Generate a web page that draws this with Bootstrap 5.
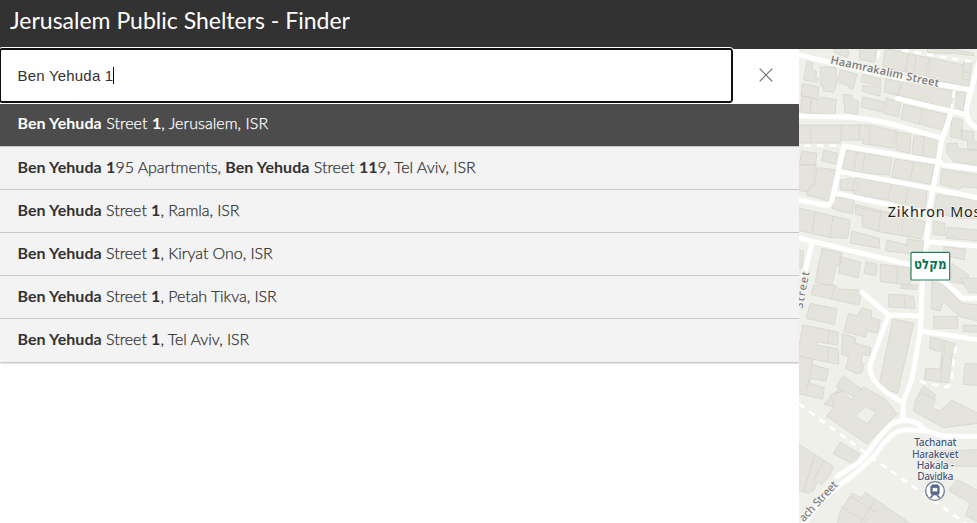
<!DOCTYPE html>
<html lang="en">
<head>
<meta charset="utf-8">
<meta name="viewport" content="width=device-width, initial-scale=1">
<title>Jerusalem Public Shelters - Finder</title>
<link href="https://cdn.jsdelivr.net/npm/bootstrap@5.3.0/dist/css/bootstrap.min.css" rel="stylesheet">
<style>
body{font-family:Lato,"Open Sans",sans-serif;color:#323232;height:100vh;overflow:hidden}
.app-header{height:49px;background:#323232;padding:0 10px 10px}
.app-header h1{font-size:23px;line-height:28px;font-weight:400}
.finder{width:799px}
.search-row{height:55px}
.search-field{width:734px;height:55px;margin-top:-1px;margin-left:-1px;border:2px solid #101010;outline:1px solid #fff;border-radius:3px;padding:0 0 1px 16.5px;font:15px "Liberation Sans",sans-serif;letter-spacing:.2px;position:relative;z-index:1}
.caret{width:1px;height:17px;background:#000}
.clear-btn{width:66px;height:52px}
.suggestions{--bs-list-group-border-radius:0;box-shadow:0 1px 2px rgba(0,0,0,.3)}
.suggestions .list-group-item{height:43.1px;padding:0 17.5px 3px;background:#f3f3f3;color:#323232;border:0;border-bottom:1px solid #c8c8c8;font-size:16px;font-weight:300;letter-spacing:-.05px;white-space:pre;-webkit-text-stroke:.25px currentColor}
.suggestions .list-group-item.active{background:#4c4c4c;color:#fff;margin:0;height:43px;padding-bottom:4px;letter-spacing:.05px}
.suggestions b{font-weight:700;letter-spacing:.07px;-webkit-text-stroke:0}
.map-pane{width:178px;background:#eff0ea}
.bld{fill:#e4e4dc;stroke:#d6d6cd;stroke-width:2.5}
.road{fill:none;stroke:#fff;stroke-width:15;stroke-linejoin:round;stroke-linecap:round}
.dash{fill:none;stroke:#fff;stroke-width:8;stroke-dasharray:20 18}
.halo{paint-order:stroke;stroke:#f4f4ef;stroke-width:6;stroke-linejoin:round;font-family:"Noto Sans",sans-serif}
</style>
<script src="https://cdn.jsdelivr.net/npm/bootstrap@5.3.0/dist/js/bootstrap.bundle.min.js"></script>
</head>
<body class="d-flex flex-column bg-white">
<header class="app-header d-flex align-items-center text-white"><h1 class="m-0">Jerusalem Public Shelters - Finder</h1></header>
<main class="d-flex flex-grow-1">
<section class="finder flex-shrink-0">
  <div class="search-row d-flex">
    <div class="search-field d-flex align-items-center bg-white flex-shrink-0" role="textbox" aria-label="Search">Ben Yehuda 1<span class="caret"></span></div>
    <button class="clear-btn btn border-0 p-0 d-flex align-items-center justify-content-center" aria-label="Clear"><svg width="14" height="14" viewBox="0 0 14 14" fill="none" stroke="#6e6e6e" stroke-width="1.2"><path d="M.7.7l12.6 12.6M13.3.7.7 13.3"/></svg></button>
  </div>
  <div class="suggestions list-group list-group-flush">
    <a class="list-group-item active d-flex align-items-center"><span><b>Ben Yehuda</b> Street <b>1</b>, Jerusalem, ISR</span></a>
    <a class="list-group-item d-flex align-items-center"><span><b>Ben Yehuda</b> <b>1</b>95 Apartments, <b>Ben Yehuda</b> Street <b>11</b>9, Tel Aviv, ISR</span></a>
    <a class="list-group-item d-flex align-items-center"><span><b>Ben Yehuda</b> Street <b>1</b>, Ramla, ISR</span></a>
    <a class="list-group-item d-flex align-items-center"><span><b>Ben Yehuda</b> Street <b>1</b>, Kiryat Ono, ISR</span></a>
    <a class="list-group-item d-flex align-items-center"><span><b>Ben Yehuda</b> Street <b>1</b>, Petah Tikva, ISR</span></a>
    <a class="list-group-item d-flex align-items-center"><span><b>Ben Yehuda</b> Street <b>1</b>, Tel Aviv, ISR</span></a>
  </div>
</section>
<aside class="map-pane flex-shrink-0">
<svg class="d-block" width="178" height="474" viewBox="6 12 534 1422">
  <!-- Buildings, north to south -->
  <g class="bld">
    <path d="M30 48 47 54 46 72 59 79 56 98 64 101 60 112 20 105ZM70 66H117V122L114 136 108 142 79 138V124L70 121ZM130 75 180 87 168 134 156 130 154 123 120 111ZM110 0H145L155 24 150 38 112 22ZM190 0H240L233 52 187 44ZM265 10 345 28 396 38 388 92 322 80 258 64ZM335 25 325 78M358 30 350 86M400 38 500 60 498 80 520 84 515 125 430 108 392 96ZM500 48 525 54 517 105 498 102ZM390 10H455L530 25V32L470 25H420L392 22Z"/>
    <path d="M198 88 252 102 250 124 192 110ZM196 120 252 128 248 154 196 138ZM266 100 312 112 302 152 262 140ZM320 106 470 138 460 192 350 162 300 150ZM478 140H505L500 198 476 190ZM16 116 66 126 62 160 12 152ZM16 152 44 158 38 205 8 200ZM44 158 65 165 70 156 118 164 114 208 38 205ZM138 148 165 150 166 164 184 168 182 208 144 202ZM198 156 262 170 258 202 192 186ZM268 160 312 172 304 216 262 206ZM320 178 448 208 440 256 400 246 312 222ZM376 192 366 236"/>
    <path d="M0 240H220L298 258 290 310 198 296 196 285H132L130 294H0ZM42 240V294M133 240V285M187 240V285M217 240V298M300 260 342 268 338 325 296 315ZM350 272 430 278 420 340 345 328ZM382 274 376 333M465 218 497 225 492 282 460 276ZM495 255 530 260V290H550V316L512 312V285H494ZM450 295H482V310L550 318V362L470 350 450 325ZM14 318 60 325 55 360 8 358ZM80 316 122 325 116 358 74 348ZM150 316 285 338 277 390 210 385 135 372ZM180 320 170 375M204 324 196 382M294 342 412 360 400 418 284 396ZM350 352 340 406"/>
  </g>
  <g class="bld" transform="translate(0 360)">
    <path d="M0 0H58L48 60 30 80 0 76ZM60 8 116 14 104 110 28 90 40 60 52 62ZM175 38 390 75 385 140 270 105 180 90 165 80ZM282 60 272 102M335 66 324 116M130 45 165 40 185 60 175 78 130 75ZM435 12 550 30V70L500 65 485 72 430 58ZM420 88 550 108V160H480L412 140ZM108 95 172 102 166 145 130 140 105 130ZM0 128 158 165V180L152 220 100 218 0 195ZM56 142 44 206M108 154 98 218M175 118 385 170 372 222 245 200 195 185 196 152 175 148ZM178 126 250 142M252 140 244 198M322 156 312 208"/>
    <path d="M165 198 248 220 246 250 160 234ZM270 225 330 240V222L380 228 375 270 265 258ZM410 168 444 175V212L408 208ZM452 186 550 196V228L448 220ZM440 245 505 252 502 285 460 275 440 280ZM75 250 136 264 128 300 118 302 104 362 54 352ZM130 275 190 292 184 338 125 325ZM207 290 240 298 236 332 202 325ZM250 298 340 308V360L250 350ZM300 304V354M0 255 20 258 14 310 0 310ZM465 295 515 330V360L460 350Z"/>
  </g>
  <g class="bld" transform="translate(0 720)">
    <path d="M50 0H115L125 12 185 15 192 28 186 60 100 42 42 28ZM115 0 102 42M40 55 120 72 112 118 28 100ZM18 120 95 135 124 142 122 180 60 170 58 180 124 192 125 238 46 222 0 210ZM97 135 92 174M97 186 90 230M155 86 180 92 195 68 225 78 222 98 250 106 242 145 210 138 205 156 140 140ZM136 146 175 158V175L222 188 218 212 196 208 193 235 202 238 195 262 178 266 146 250 155 215 134 208ZM288 102 350 114 302 324 244 310ZM275 28 325 30 350 35 354 70 275 66ZM322 35V68M312 0H362L358 14 312 10Z"/>
    <path d="M405 -10 440 0 495 55 550 60V110L490 95 438 50 430 78 402 72ZM410 94H482V130H410ZM498 120 550 122V142L498 140ZM400 155 475 176 465 210 455 294 382 284 386 250 430 252 435 200 398 192ZM442 170V202M438 212 430 290M505 235 550 238V302L498 298ZM0 212 46 222V240L94 252 88 288 42 280 38 295 82 308 76 342 0 325ZM46 240 30 310M138 272 218 330 205 354 118 305ZM125 310 160 345 140 375 80 358ZM380 302 416 330 410 345 400 375 360 355 362 330ZM490 -20H550V25L515 22Z"/>
  </g>
  <g class="bld" transform="translate(0 1074)">
    <path fill-rule="evenodd" d="M100 -25 140 -35 160 -10 200 -48 265 -12 300 32 286 46 210 123 88 40 112 10ZM175 40 210 62 238 28 205 10ZM355 -10 375 -30 415 -10 405 18 430 22 465 -8 550 34V60L440 74 350 25ZM130 118 188 152 172 185 108 152ZM0 120 108 190 100 215 75 245 60 238 50 262 35 270 0 262ZM53 156 20 265M80 175 48 235M165 270 195 285 205 268 345 365H120L130 325ZM235 290 190 360M380 145 550 140V190H400ZM480 230 550 266V360L505 338 520 300 455 262ZM130 310 208 356M158 280 240 330"/>
  </g>
  <!-- Footpaths -->
  <g class="dash">
    <path d="M246 18 240 60M315 16 525 50M471 138 464 190M22 302H135M476 905 462 1010Q458 1028 440 1026L345 1004M6 1077 220 1234 520 1445"/>
  </g>
  <!-- Streets -->
  <g class="road">
    <path d="M0 28 110 55Q300 100 420 118L520 134M302 161 505 208M548 40 512 175Q496 235 550 252M464 200 433 290 422 360 400 470 388 600 376 720 370 858 345 1000 318 1074V1128M0 214 150 216C270 225 320 250 427 277M0 464 80 480Q100 484 106 462L140 303 430 352M130 380 410 432 550 460M120 445 270 478 390 502M0 578 50 590 350 662 430 700 497 760H550M45 595 18 702M395 590 550 604M440 360 550 374M195 742 275 810 370 813M275 810 222 952Q202 1010 318 1073M370 858 550 885"/>
    <path d="M12 1450C50 1390 80 1355 135 1315 185 1280 205 1260 240 1222 290 1150 318 1154 330 1154L388 1158 445 1174H550M388 1158C360 1125 320 1115 280 1140 235 1180 215 1240 160 1268L120 1295"/>
  </g>
  <text class="halo" transform="translate(99 55) rotate(12.3)" font-size="33" font-weight="500" fill="#737373" textLength="332">Haamrakalim Street</text>
  <text class="halo" transform="translate(20 1432) rotate(-47)" font-size="33" fill="#6e6e6e" textLength="152">ach Street</text>
  <text class="halo" transform="translate(16 792) rotate(-79)" font-size="33" fill="#6e6e6e" textLength="112">Street</text>
  <text class="halo" x="272" y="516" font-size="43" font-weight="400" letter-spacing="2.7" fill="#222">Zikhron Moshe</text>
  <!-- Shelter marker -->
  <rect x="342" y="622" width="116" height="83" rx="3" fill="#fff" stroke="#24805d" stroke-width="3.5"/>
  <text x="400" y="673" text-anchor="middle" direction="rtl" font-family="DejaVu Sans,sans-serif" font-weight="700" font-size="42" fill="#08724c" textLength="98" lengthAdjust="spacingAndGlyphs">מקלט</text>
  <!-- Light rail station -->
  <g class="halo" font-size="31" font-weight="500" fill="#4b547e" text-anchor="middle">
    <text x="415" y="1203" textLength="127">Tachanat</text><text x="415" y="1238" textLength="140">Harakevet</text><text x="415" y="1272" textLength="112">Hakala -</text><text x="415" y="1305" textLength="109">Davidka</text>
  </g>
  <circle cx="414" cy="1338" r="28" fill="#fff" stroke="#6d7d99" stroke-width="4"/>
  <path d="M405 1319H423V1323H427V1342Q427 1350 419 1350H409Q401 1350 401 1342V1323H405ZM406 1328V1340H422V1328ZM404 1351 399 1358H404L409 1351ZM424 1351 429 1358H424L419 1351Z" fill="#566889" stroke="#566889" stroke-width="1.5" fill-rule="evenodd"/>
</svg>
</aside>
</main>
</body>
</html>
